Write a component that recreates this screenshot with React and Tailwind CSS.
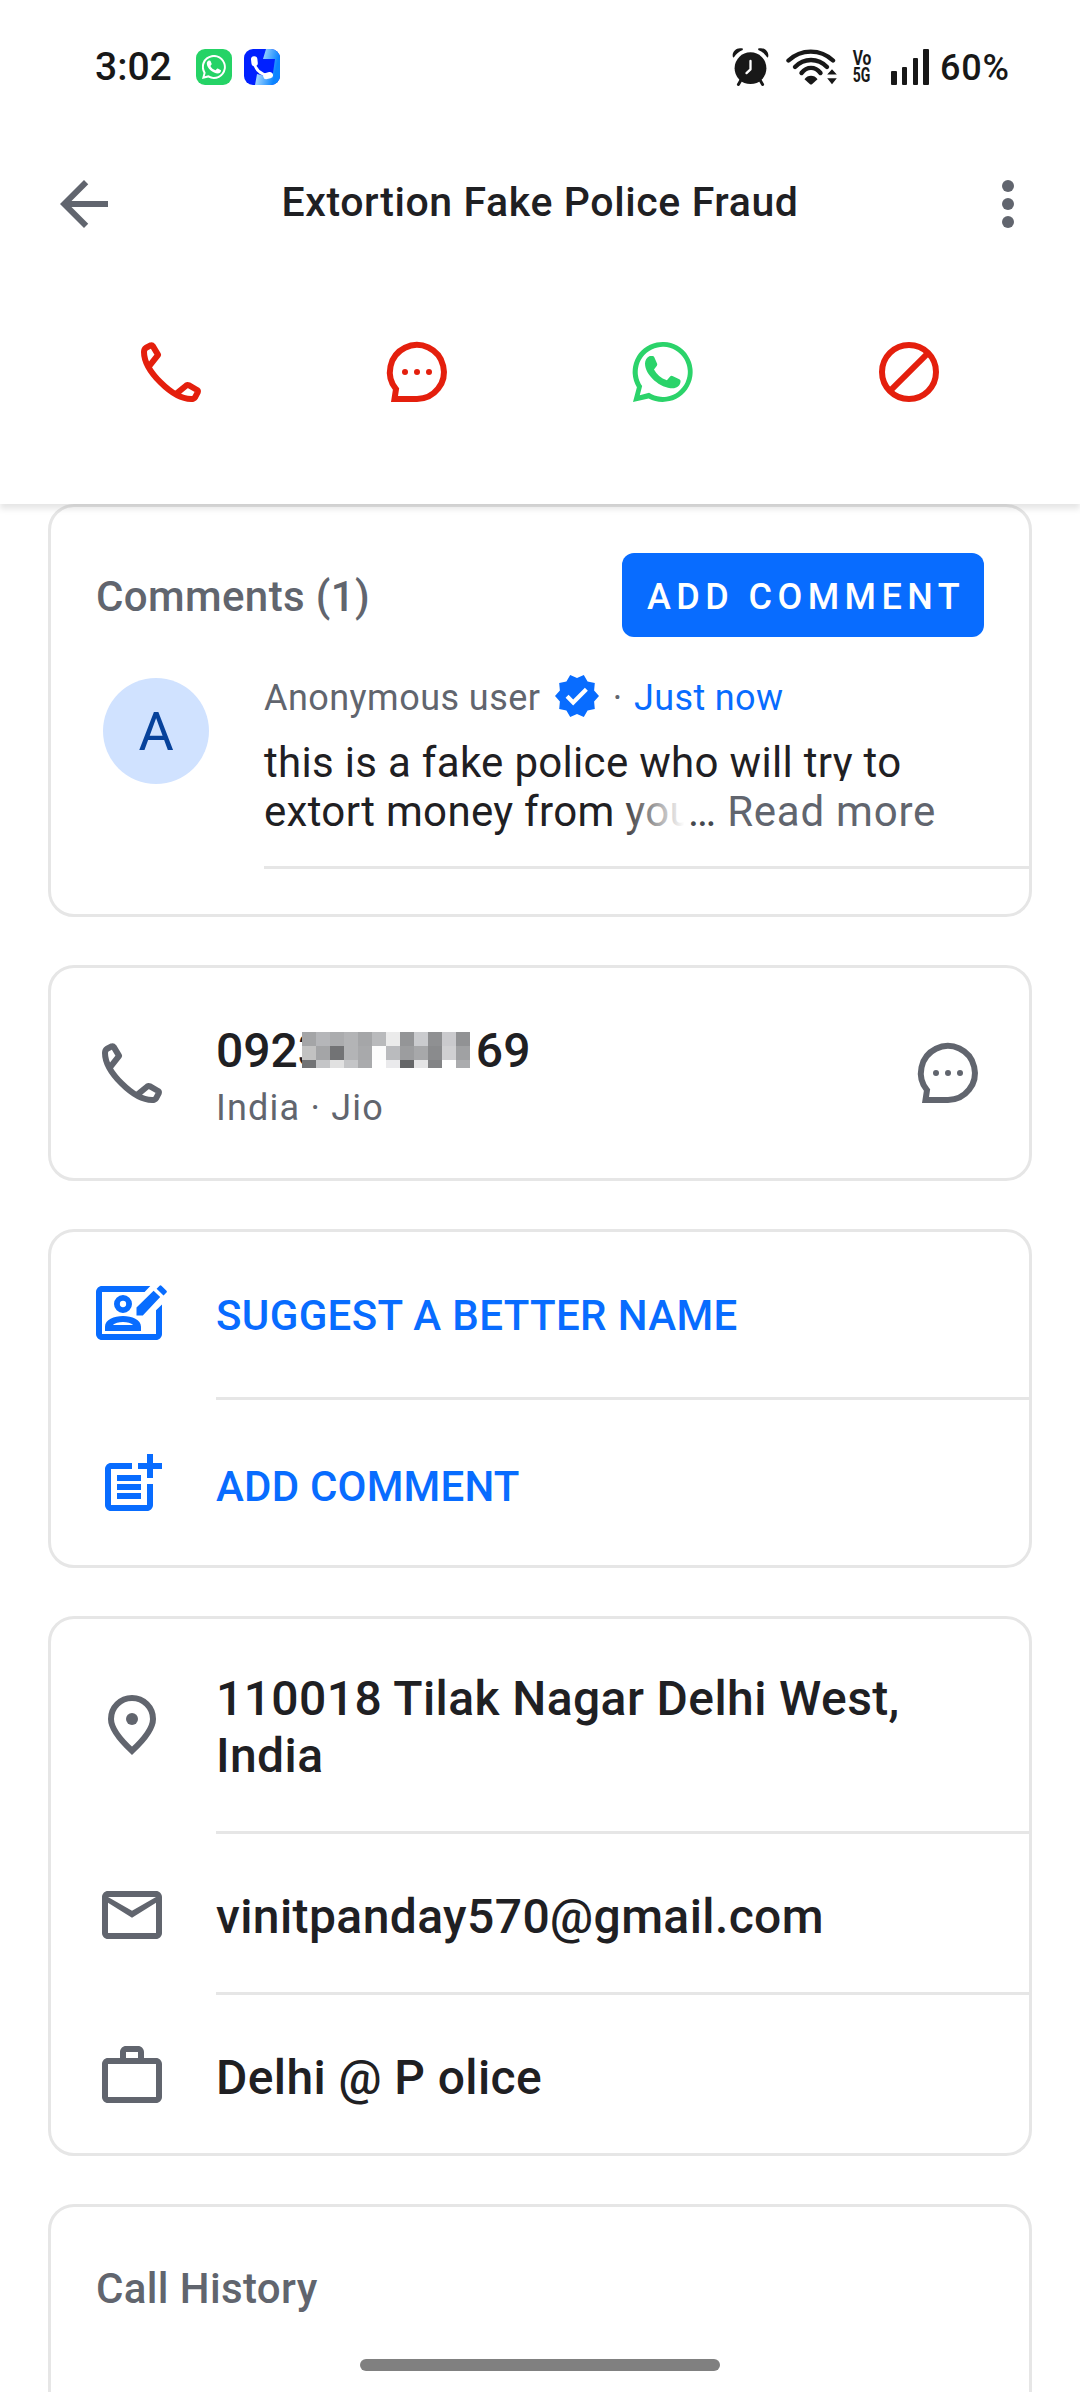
const WHATSAPP_RING =
  'M2 22l1.3-4.9A10 10 0 1 1 7.2 20.8zM4.25 19.75l3.1-.8A8.35 8.35 0 1 0 5.05 16.7z'
const WHATSAPP_PHONE =
  'M7.6 6.65h.9q.4 0 .6.4l.95 2.2q.1.35-.1.65L9 11.15c.9 1.7 2.3 2.95 4.3 3.6l1.15-1.3q.3-.3.7-.15l2.3 1.1q.4.2.4.6c0 1.6-1.4 2.45-2.6 2.45-4.1 0-9.25-4.35-9.25-8.3 0-1.05.6-2.1 1.6-2.5z'

// Blurred part of the phone number, one shade per tile
const MOSAIC = [
  ['#a4a5a7', '#b5b6b9', '#abacae', '#b3b4b6', '#a5a6a8', '#b9babc', '#ebebeb', '#949597', '#cacbce', '#8f9092', '#cacacd', '#919294'],
  ['#c2c2c2', '#a4a5a7', '#727375', '#b3b4b6', '#a8a9ab', '#fcfcfc', '#babbbe', '#9c9d9f', '#a7a8aa', '#8a8b8d', '#d0d0d2', '#a0a1a3'],
  ['#727375', '#c4c5c7', '#e1e1e1', '#c4c5c7', '#aaabad', '#ffffff', '#eaeaec', '#656668', '#e4e4e5', '#838486', '#ffffff', '#abacae'],
]

function Icon({ children, className = '' }) {
  return (
    <svg viewBox="0 0 24 24" fill="currentColor" className={`size-[72px] shrink-0 ${className}`}>
      {children}
    </svg>
  )
}

const BackIcon = () => (
  <Icon>
    <path d="M20 11H7.83l5.59-5.59L12 4l-8 8 8 8 1.41-1.41L7.83 13H20v-2z" />
  </Icon>
)

const MoreIcon = () => (
  <Icon>
    <circle cx="12" cy="6" r="2" />
    <circle cx="12" cy="12" r="2" />
    <circle cx="12" cy="18" r="2" />
  </Icon>
)

const PhoneIcon = () => (
  <Icon>
    <path
      d="M4.6 10.2L7.7 6.3 5.9 3.3Q5.7 3 5.3 3.1L3.7 3.9Q3 4.4 3 5.3C3 11.5 12.5 21 18.7 21Q19.6 21 20.1 20.3L20.9 18.8Q21.1 18.3 20.7 18L17.9 16.4Q17.5 16.2 17.1 16.5L13.8 19.2"
      fill="none" stroke="currentColor" strokeWidth="2" strokeLinejoin="round"
    />
  </Icon>
)

const ChatIcon = () => (
  <Icon>
    <path d="M12 21A9 9 0 1 0 5 17.7L4.5 21z" fill="none" stroke="currentColor" strokeWidth="2" />
    <circle cx="8" cy="12" r="1" />
    <circle cx="12" cy="12" r="1" />
    <circle cx="16" cy="12" r="1" />
  </Icon>
)

const WhatsappIcon = () => (
  <Icon>
    <path d={WHATSAPP_RING} fillRule="evenodd" />
    <path d={WHATSAPP_PHONE} />
  </Icon>
)

const BlockIcon = () => (
  <Icon>
    <circle cx="12" cy="12" r="9" fill="none" stroke="currentColor" strokeWidth="2" />
    <path d="M5.6 18.4L18.4 5.6" stroke="currentColor" strokeWidth="2" />
  </Icon>
)

const EditContactIcon = () => (
  <Icon>
    <path d="M18.1 3H2C.9 3 0 3.9 0 5v14c0 1.1.9 2 2 2h18c1.1 0 2-.9 2-2V9.2l-2 1.9V19H2V5h14.2z" />
    <path d="M9 6a3 3 0 1 0 0 6 3 3 0 0 0 0-6zm0 1.95a1.05 1.05 0 1 1 0 2.1 1.05 1.05 0 0 1 0-2.1z" />
    <path d="M3 18v-1.4C3 14.2 6 13 9 13s6 1.2 6 3.6V18zM5.6 16h6.8c-.7-.6-2-1-3.4-1s-2.7.4-3.4 1z" fillRule="evenodd" />
    <path d="M13.5 12.8v-2.6l5.7-5.6 2.2 2.1-5.8 6.1zM20.2 3.9l1-1q.3-.3.6 0l1.7 1.7q.3.3 0 .6l-1 1z" />
  </Icon>
)

const PostAddIcon = () => (
  <Icon>
    <path d="M12 5H5c-1.1 0-2 .9-2 2v12c0 1.1.9 2 2 2h12c1.1 0 2-.9 2-2v-7h-2v7H5V7h7z" />
    <path d="M17 2h2v3h3v2h-3v3h-2V7h-3V5h3zM7 9h8v2H7zM7 12h8v2H7zM7 15h8v2H7z" />
  </Icon>
)

const PinIcon = () => (
  <Icon>
    <path
      d="M12 20.6C14.8 18 19 13.6 19 10a7 7 0 0 0-14 0c0 3.6 4.2 8 7 10.6z"
      fill="none" stroke="currentColor" strokeWidth="2"
    />
    <circle cx="12" cy="10" r="2" />
  </Icon>
)

const MailIcon = () => (
  <Icon>
    <path d="M20 4H4c-1.1 0-2 .9-2 2v12c0 1.1.9 2 2 2h16c1.1 0 2-.9 2-2V6c0-1.1-.9-2-2-2zm0 14H4V7.9l8 5.05 8-5.05zm-8-7.4L4 6h16z" />
  </Icon>
)

const WorkIcon = () => (
  <Icon>
    <path
      d="M10 4v2h4V4zM8 6V4c0-1.1.9-2 2-2h4c1.1 0 2 .9 2 2v2h4c1.1 0 2 .9 2 2v11c0 1.1-.9 2-2 2H4c-1.1 0-2-.9-2-2V8c0-1.1.9-2 2-2zM4 8v11h16V8z"
      fillRule="evenodd"
    />
  </Icon>
)

const VerifiedIcon = () => (
  <svg viewBox="0 0 24 24" fill="currentColor" className="size-12 shrink-0 text-[#086cff]">
    <path d="M23 12l-2.44-2.79.34-3.69-3.61-.82-1.89-3.2L12 2.96 8.6 1.5 6.71 4.69 3.1 5.5l.34 3.7L1 12l2.44 2.79-.34 3.7 3.61.82L8.6 22.5l3.4-1.47 3.4 1.46 1.89-3.19 3.61-.82-.34-3.69L23 12zm-12.91 4.72l-3.8-3.81 1.48-1.48 2.32 2.33 5.85-5.87 1.48 1.48-7.33 7.35z" />
  </svg>
)

function StatusBar() {
  return (
    <div className="flex h-[134px] items-center pl-[95px] text-[#181818]">
      <span className="w-[101px] text-[39px] font-medium">3:02</span>
      <div className="flex size-9 items-center justify-center rounded-[9px] bg-[#25d366]">
        <svg viewBox="2 2 20 20" fill="white" className="size-6">
          <path d={WHATSAPP_RING} fillRule="evenodd" />
          <path d={WHATSAPP_PHONE} />
        </svg>
      </div>
      <svg viewBox="0 0 36 36" className="ml-3 size-9 rounded-[9px]">
        <defs>
          <linearGradient id="dialer" x1="0.3" y1="0.2" x2="0.9" y2="0.4">
            <stop offset="0" stopColor="#9ad2ff" />
            <stop offset="1" stopColor="#0a84ff" />
          </linearGradient>
        </defs>
        <rect width="36" height="36" fill="#0020ff" />
        <path d="M22 0h14v36H11l2-11 8 2 8-3 2-14H19z" fill="url(#dialer)" />
        <path d="M9.5 12C11 20 16 25.5 25 26.5" fill="none" stroke="white" strokeWidth="2.8" />
        <path d="M10.2 10.4l.4 3.6M22.4 27l3.4-.8" stroke="white" strokeWidth="6.4" strokeLinecap="round" />
      </svg>

      {/* Alarm */}
      <svg viewBox="0 0 37 38" fill="currentColor" className="ml-[452px] h-[38px] w-[37px]">
        <circle cx="18.5" cy="20.2" r="15.9" />
        <path d="M9 32l-2.6 4.400M28 32l2.600 4.400" stroke="currentColor" strokeWidth="3" strokeLinecap="round" />
        <path d="M1 9.500C-.800 4 4.500-1.500 10.800.600L10.800 2C7 3.500 4 6 2 9.300zM36 9.500C37.800 4 32.500-1.500 26.200.600L26.200 2C30 3.500 33 6 35 9.300z" />
        <path d="M18.500 13v8.300l-4 3.800" fill="none" stroke="white" strokeWidth="2.300" strokeLinecap="round" strokeLinejoin="round" />
      </svg>

      {/* Wifi with traffic arrows */}
      <svg viewBox="0 0 51 38" fill="currentColor" className="ml-[17px] h-[38px] w-[51px]">
        <g fill="none" stroke="currentColor" strokeWidth="4.400" strokeLinecap="round">
          <path d="M2.500 12.500C15 .600 34.500 .600 47 12.500" />
          <path d="M9 19C18 9.600 32 9.600 41 19" />
          <path d="M15.500 25C21 18.200 29 18.200 34.500 25" />
        </g>
        <path d="M18.500 31.200C21.500 26.600 28.500 26.600 31.500 31.200L26 36.200Q25 37 24 36.200z" />
        <path d="M41.200 26.500l4.800-5.300 4.800 5.300zM41.200 30.300l4.800 6 4.800-6z" />
      </svg>

      <div className="ml-[15px] flex w-5 flex-col items-center text-[20px] leading-[17px] font-bold">
        <span className="scale-x-[0.78]">Vo</span>
        <span className="scale-x-[0.7]">5G</span>
      </div>

      <div className="ml-[19px] flex h-9 items-end gap-[5.200px]">
        <div className="h-[14px] w-[5.600px] rounded-[1px] bg-[#181818]" />
        <div className="h-[18px] w-[5.600px] rounded-[1px] bg-[#181818]" />
        <div className="h-[27px] w-[5.600px] rounded-[1px] bg-[#181818]" />
        <div className="h-9 w-[5.600px] rounded-[1px] bg-[#181818]" />
      </div>
      <span className="ml-[11px] pt-px text-[36px] font-medium tracking-[0.800px]">60%</span>
    </div>
  )
}

function Card({ children, className = '' }) {
  return <section className={`rounded-[26px] border-[3px] border-[#e6e6e6] bg-white ${className}`}>{children}</section>
}

const Divider = () => <div className="ml-[165px] h-[3px] bg-[#e6e6e6]" />

function Row({ icon, children, className = '' }) {
  return (
    <div className={`flex items-center gap-12 px-[45px] text-[#61656e] ${className}`}>
      {icon}
      {children}
    </div>
  )
}

export default function App() {
  return (
    <div className="relative h-[2392px] w-[1080px] overflow-hidden bg-white font-['Roboto',sans-serif] text-[#1f2023]">
      <header className="relative z-10 h-[504px] bg-white shadow-[0_5px_6px_rgba(0,0,0,0.1)]">
        <StatusBar />
        <div className="flex h-[140px] items-center pr-9 pl-12 text-[#61656e]">
          <BackIcon />
          <h1 className="flex-1 pr-3 pb-0.5 text-center text-[41px] font-medium tracking-[0.610px] text-[#1f2023]">
            Extortion Fake Police Fraud
          </h1>
          <MoreIcon />
        </div>
        <nav className="grid h-[196px] grid-cols-4 place-items-center px-12 text-[#e41f0d]">
          <PhoneIcon />
          <ChatIcon />
          <span className="text-[#2bd36a]"><WhatsappIcon /></span>
          <BlockIcon />
        </nav>
      </header>

      <main className="flex flex-col gap-12 px-12">
        {/* Comments */}
        <Card className="h-[413px] pt-[46px]">
          <div className="flex h-[84px] items-center justify-between px-[45px]">
            <h2 className="pt-[3px] text-[42px] font-medium tracking-[0.390px] text-[#61656e]">Comments (1)</h2>
            <button className="h-[84px] w-[362px] rounded-xl bg-[#086cff] pt-[3px] pl-[25px] text-left text-[36px] font-medium tracking-[5.420px] whitespace-nowrap text-white">
              ADD COMMENT
            </button>
          </div>
          <div className="flex pt-[37px]">
            <div className="mt-1 mr-[55px] ml-[52px] flex size-[106px] shrink-0 items-center justify-center rounded-full bg-[#d0e2ff] pt-px text-[54px] text-[#07429b]">
              A
            </div>
            <div className="flex-1">
              <div className="flex h-12 items-center text-[36px] text-[#61656e]">
                <span className="w-[289px] tracking-[0.460px] whitespace-nowrap">Anonymous user</span>
                <span className="pb-1"><VerifiedIcon /></span>
                <span className="w-[33px] text-center">·</span>
                <span className="tracking-[0.370px] text-[#086cff]">Just now</span>
              </div>
              <div className="relative mt-4 mb-[30px] text-[42px] leading-[49px] tracking-[0.310px]">
                <p>this is a fake police who will try to<br />extort money from you</p>
                {/* Fades the end of the last line out under the link */}
                <div className="absolute right-0 bottom-0 left-[352px] flex h-[55px] items-end">
                  <div className="h-full w-[72px] bg-linear-to-r from-white/0 to-white to-95%" />
                  <div className="flex h-full flex-1 items-end bg-white whitespace-pre">
                    <span className="text-[#45484e]">… </span>
                    <span className="tracking-[0.770px] text-[#61656e]">Read more</span>
                  </div>
                </div>
              </div>
              <div className="h-[3px] bg-[#e6e6e6]" />
            </div>
          </div>
        </Card>

        {/* Phone number */}
        <Card className="h-[216px]">
          <Row icon={<PhoneIcon />} className="h-full">
            <div className="flex-1 pt-2">
              <div className="flex h-[57px] items-center text-[48px] leading-[57px] font-medium text-[#1f2023]">
                <span>092</span>
                <span className="w-1 overflow-hidden">3</span>
                <div className="mb-px grid grid-cols-[repeat(12,14px)] grid-rows-[14px_14px_8px]">
                  {MOSAIC.flat().map((color, i) => (
                    <div key={i} style={{ backgroundColor: color }} />
                  ))}
                </div>
                <span className="ml-1.5">69</span>
              </div>
              <p className="mt-[5px] text-[36px] leading-[48px] tracking-[1.200px]">India · Jio</p>
            </div>
            <ChatIcon />
          </Row>
        </Card>

        {/* Suggestions */}
        <Card>
          <Row icon={<span className="text-[#086cff]"><EditContactIcon /></span>} className="h-[165px] pb-[3px]">
            <span className="pt-[5px] text-[42px] font-medium tracking-[0.370px] text-[#086cff]">SUGGEST A BETTER NAME</span>
          </Row>
          <Divider />
          <Row icon={<span className="text-[#086cff]"><PostAddIcon /></span>} className="h-[165px] pt-[3px]">
            <span className="pt-[5px] text-[42px] font-medium tracking-[0.200px] text-[#086cff]">ADD COMMENT</span>
          </Row>
        </Card>

        {/* Contact details */}
        <Card className="text-[48px] leading-[57px] font-medium tracking-[0.400px]">
          <Row icon={<PinIcon />} className="h-[212px]">
            <p className="pt-1 text-[#1f2023]">110018 Tilak Nagar Delhi West,<br />India</p>
          </Row>
          <Divider />
          <Row icon={<MailIcon />} className="h-[158px] pt-1">
            <p className="pt-[3px] text-[#1f2023]">vinitpanday570@gmail.com</p>
          </Row>
          <Divider />
          <Row icon={<WorkIcon />} className="h-[158px] pt-1">
            <p className="pt-[3px] text-[#1f2023]">Delhi @ P olice</p>
          </Row>
        </Card>

        {/* Call history, continues below the fold */}
        <Card className="h-[240px] px-[45px] pt-[58px]">
          <h2 className="text-[42px] leading-[48px] font-medium tracking-[0.370px] text-[#61656e]">Call History</h2>
        </Card>
      </main>

      {/* Gesture bar */}
      <div className="absolute bottom-[21px] left-[360px] z-20 h-3 w-[360px] rounded-full bg-[#808080]" />
    </div>
  )
}
